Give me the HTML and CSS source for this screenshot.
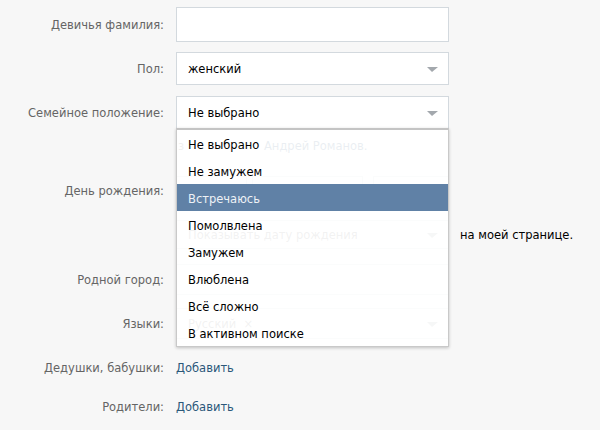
FILE: index.html
```html
<!DOCTYPE html>
<html lang="ru">
<head>
<meta charset="utf-8">
<link rel="stylesheet" href="styles.css">
</head>
<body>
<div class="form">
  <div class="row r-maiden">
    <div class="label">Девичья фамилия:</div>
    <div class="field"><div class="input"></div></div>
  </div>
  <div class="row r-sex">
    <div class="label">Пол:</div>
    <div class="field"><div class="select"><span>женский</span><i class="arrow"></i></div></div>
  </div>
  <div class="row r-status">
    <div class="label">Семейное положение:</div>
    <div class="field status-field">
      <div class="select open"><span>Не выбрано</span><i class="arrow"></i></div>
      <ul class="dropdown">
        <li>Не выбрано</li>
        <li>Не замужем</li>
        <li class="active">Встречаюсь</li>
        <li>Помолвлена</li>
        <li>Замужем</li>
        <li>Влюблена</li>
        <li>Всё сложно</li>
        <li>В активном поиске</li>
      </ul>
    </div>
  </div>
  <div class="row r-partner">
    <div class="label"></div>
    <div class="field partner"><span class="pre">з</span><a class="link">Андрей Романов.</a></div>
  </div>
  <div class="row r-bday">
    <div class="label">День рождения:</div>
    <div class="field bday">
      <div class="select s-day"><span>Д</span><i class="arrow"></i></div>
      <div class="select s-month"><span>Месяц:</span><i class="arrow"></i></div>
      <div class="select s-year"><span>Год:</span><i class="arrow"></i></div>
    </div>
  </div>
  <div class="row r-show">
    <div class="label"></div>
    <div class="field show">
      <div class="select s-show"><span class="muted">Показывать дату рождения</span><i class="arrow"></i></div>
      <span class="after">на моей странице.</span>
    </div>
  </div>
  <div class="row r-city">
    <div class="label">Родной город:</div>
    <div class="field"><div class="input"></div></div>
  </div>
  <div class="row r-lang">
    <div class="label">Языки:</div>
    <div class="field"><div class="select"><span class="muted">Русский &nbsp;×</span><i class="arrow"></i></div></div>
  </div>
  <div class="row r-grand">
    <div class="label">Дедушки, бабушки:</div>
    <div class="field"><a class="link">Добавить</a></div>
  </div>
  <div class="row r-parents">
    <div class="label">Родители:</div>
    <div class="field"><a class="link">Добавить</a></div>
  </div>
</div>
</body>
</html>
```
FILE: styles.css
```css
html, body {
  margin: 0;
  padding: 0;
  background: #f7f7f7;
}
body {
  font-family: "DejaVu Sans", Verdana, sans-serif;
  font-size: 11.5px;
  color: #000;
}
.form {
  display: flex;
  flex-direction: column;
  padding-top: 7px;
}
.row {
  display: flex;
  align-items: center;
}
.label {
  width: 164px;
  text-align: right;
  color: #656565;
  flex: none;
}
.field {
  margin-left: 12px;
  width: 273px;
  flex: none;
  display: flex;
  align-items: center;
}
.input, .select {
  box-sizing: border-box;
  width: 273px;
  background: #fff;
  border: 1px solid #d3d9de;
}
.input { height: 35px; }
.select {
  height: 33px;
  display: flex;
  align-items: center;
  justify-content: space-between;
  padding: 1px 10px 0 11px;
}
.arrow {
  width: 0;
  height: 0;
  border-left: 5px solid transparent;
  border-right: 6px solid transparent;
  border-top: 5px solid #a3a8ad;
  margin-top: 1px;
}
.r-maiden { height: 35px; }
.r-sex { height: 33px; margin-top: 10px; }
.r-status { height: 33px; margin-top: 11px; }
.status-field { position: relative; }
.select.open {
  height: 33px;
  border-bottom-color: #c9c9c9;
}
.dropdown {
  position: absolute;
  z-index: 5;
  top: 32px;
  left: 0;
  margin: 0;
  padding: 0;
  list-style: none;
  box-sizing: border-box;
  width: 273px;
  background: rgba(255, 255, 255, 0.9);
  border: 1px solid #c9c9c9;
  border-top: 2px solid #c4c4c4;
  box-shadow: 0 1px 3px rgba(0, 0, 0, 0.22);
}
.dropdown li {
  height: 23px;
  line-height: 23px;
  padding-top: 4px;
  padding-left: 11px;
  color: #000;
}
.dropdown li.active {
  background: rgba(87, 122, 161, 0.95);
  color: #eef2f6;
}
.r-partner { height: 18px; margin-top: 8px; }
.partner { color: #656565; }
.partner .pre { width: 86px; padding-left: 2px; }
.link { color: #2b587a; }
.r-bday { height: 30px; margin-top: 21px; }
.bday .select { height: 30px; padding: 0 8px 0 11px; }
.s-day { width: 71px !important; }
.s-month { width: 111px !important; margin-left: 5px; }
.s-year { width: 76px !important; margin-left: 10px; }
.bday .select span { color: #777; }
.r-show { height: 29px; margin-top: 14px; }
.show { width: auto; }
.s-show { height: 29px !important; }
.muted { color: #777; }
.after { margin-left: 11px; color: #000; }
.r-city { height: 31px; margin-top: 15px; }
.r-city .input { height: 31px; }
.r-lang { height: 31px; margin-top: 13px; }
.r-lang .select { height: 31px; }
.r-grand { height: 20px; margin-top: 19px; }
.r-parents { height: 20px; margin-top: 19px; }
```
